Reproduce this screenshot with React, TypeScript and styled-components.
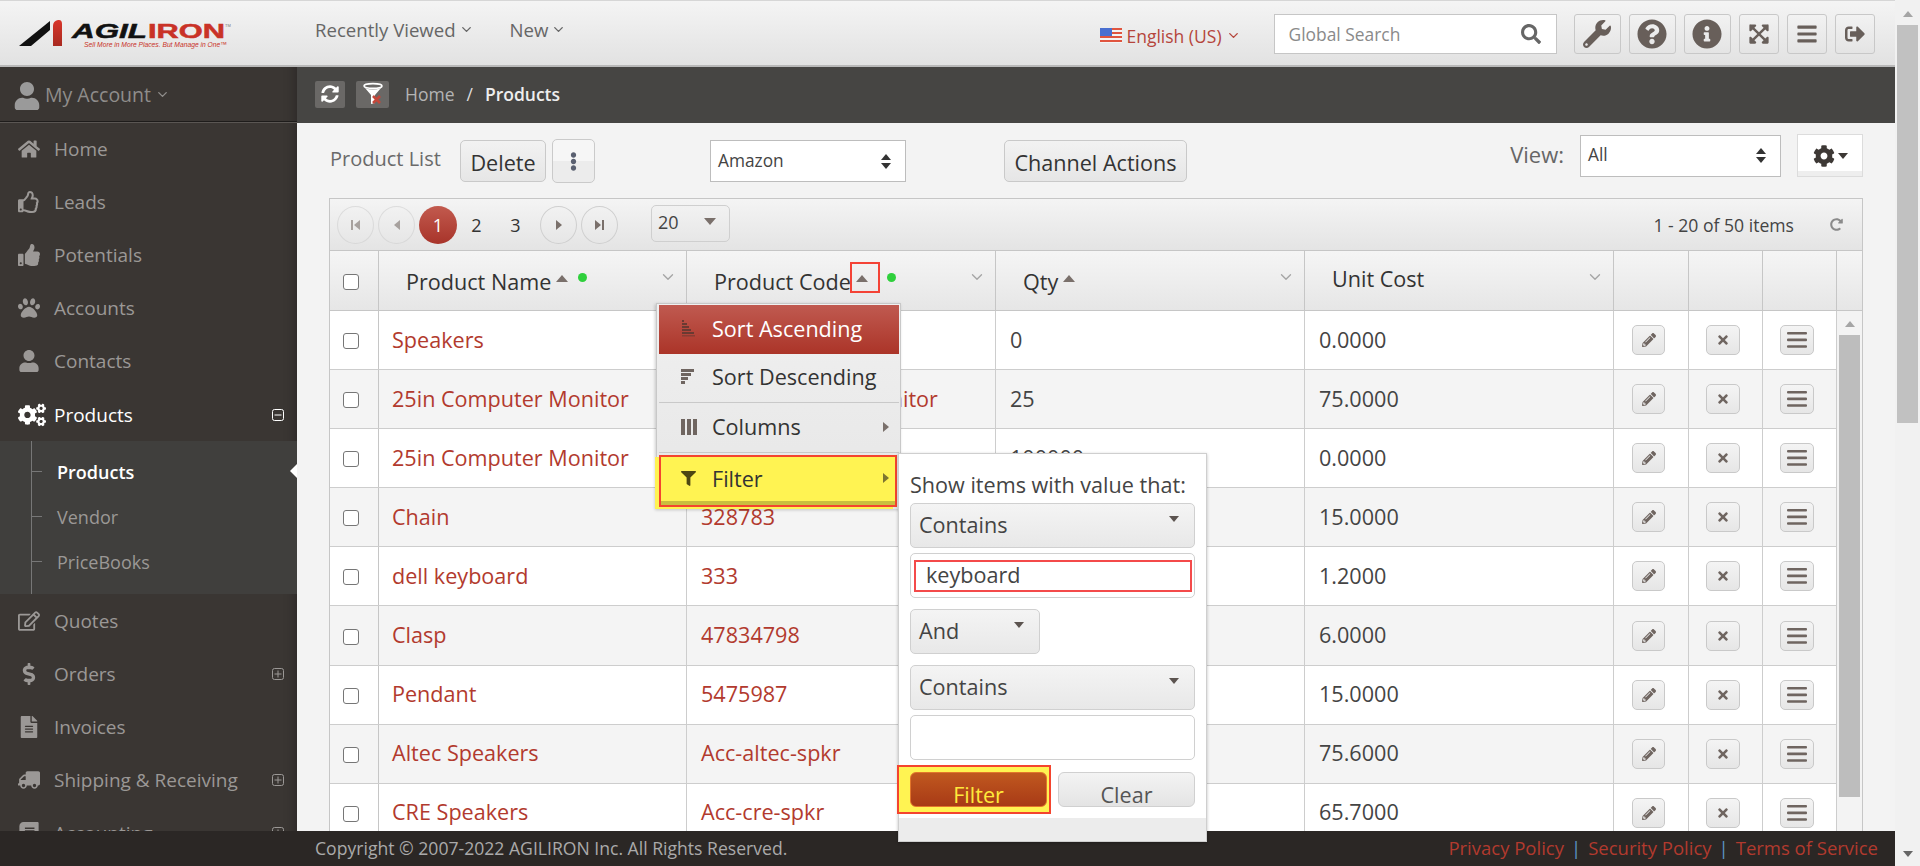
import React from "react";
import styled, { createGlobalStyle } from "styled-components";
import {
  FaHome, FaRegThumbsUp, FaThumbsUp, FaPaw, FaUser, FaCogs, FaRegEdit, FaDollarSign, FaFileAlt, FaTruck, FaBook,
  FaWrench, FaQuestionCircle, FaInfoCircle, FaExpandArrowsAlt, FaBars, FaSignOutAlt, FaSearch, FaSyncAlt, FaCog,
  FaPencilAlt, FaTimes, FaEllipsisV, FaFilter, FaRedoAlt,
} from "react-icons/fa";
import { ChevronDown } from "lucide-react";

const Global = createGlobalStyle`
  html, body { margin: 0; padding: 0; height: 100%; overflow: hidden; }
  body { font-family: "Open Sans", "Liberation Sans", sans-serif; color: #333; }
  * { box-sizing: border-box; }
`;

const ACCENT = "#b23a2e";

const Shell = styled.div`position: relative; display: flex; width: 100%; height: 100vh; overflow: hidden; isolation: isolate;`;
const PageColumn = styled.div`flex: 1; min-width: 0; display: flex; flex-direction: column;`;
const PageScroll = styled.div`
  width: 25px; background: #f1f1f1; display: flex; flex-direction: column; align-items: flex-start; padding: 9px 2px 7px 2px;
`;
const ScrollThumb = styled.div`width: 21px; height: 398px; background: #c1c1c1; margin-top: 6px;`;
const Spacer = styled.div`flex: 1;`;
const Tri = styled.span<{ $dir: "up" | "down" | "left" | "right"; $s?: number; $c?: string }>`
  display: inline-block; flex: none; width: 0; height: 0;
  ${(p) => {
    const s = p.$s ?? 6; const c = p.$c ?? "#7a706b";
    if (p.$dir === "up") return `border-left:${s}px solid transparent;border-right:${s}px solid transparent;border-bottom:${s + 1}px solid ${c};`;
    if (p.$dir === "down") return `border-left:${s}px solid transparent;border-right:${s}px solid transparent;border-top:${s + 1}px solid ${c};`;
    if (p.$dir === "left") return `border-top:${s}px solid transparent;border-bottom:${s}px solid transparent;border-right:${s + 1}px solid ${c};`;
    return `border-top:${s}px solid transparent;border-bottom:${s}px solid transparent;border-left:${s + 1}px solid ${c};`;
  }}
`;
const ScrollArrowBox = styled.div`width: 21px; display: flex; justify-content: center; height: 10px; align-items: center;`;

/* Header */
const Header = styled.header`
  height: 67px; flex: none; display: flex; align-items: center; position: relative;
  background: linear-gradient(#f4f4f4, #e2e2e2); border-top: 1px solid #d6d6d6; border-bottom: 2px solid #b9b9b9;
  font-size: 18.6px; color: #666;
`;
const LogoSvg = styled.svg`position: absolute; left: 0; top: -1px;`;
const NavItem = styled.div<{ $ml: number }>`
  display: flex; align-items: center; gap: 3px; margin-left: ${(p) => p.$ml}px; margin-top: -7px; white-space: nowrap;
`;
const Chev = styled(ChevronDown).attrs({ size: 15, strokeWidth: 2.2 })`flex: none;`;
const Lang = styled.div`
  display: flex; align-items: center; color: #b5453b; margin-left: 534px; margin-top: 5px; white-space: nowrap; font-size: 17.5px; gap: 4px;
`;
const SearchBox = styled.div`
  width: 283px; height: 40px; margin-left: 33px; background: #fff; border: 1px solid #c6c6c6; display: flex; align-items: center; padding: 0 15px 0 14px; margin-top: 2px; color: #666;
`;
const SearchInput = styled.input`
  flex: 1; min-width: 0; border: 0; outline: 0; padding: 0; background: transparent; font: inherit; font-size: 17.4px; color: #555;
  &::placeholder { color: #8a8a8a; opacity: 1; }
`;
const ToolBtn = styled.div<{ $w: number; $mr?: number }>`
  width: ${(p) => p.$w}px; height: 40px; margin-right: ${(p) => p.$mr ?? 8}px; border: 1px solid #c8c8c8; border-radius: 3px;
  background: linear-gradient(#f2f2f2, #e4e4e4); display: flex; align-items: center; justify-content: center; color: #685f5a; margin-top: 2px; flex: none;
`;
const ToolGroup = styled.div`display: flex; margin-left: 17px;`;

/* Body */
const Middle = styled.div`flex: 1; min-height: 0; display: flex; overflow: hidden;`;
const Sidebar = styled.nav`
  width: 297px; flex: none; background: #3a3633; box-shadow: inset -14px 0 12px -12px rgba(0,0,0,.25); color: #9b9896; font-size: 19px;
`;
const Account = styled.div`
  height: 55px; display: flex; align-items: center; padding-left: 13px; border-bottom: 1px solid #1e1c1b; box-shadow: 0 1px 0 #5a5653; color: #8f8d8b; gap: 4px; font-size: 19.5px;
`;
const AccountIcon = styled(FaUser)`font-size: 28px; color: #9a9a9a; margin-top: 3px;`;
const MenuItem = styled.div<{ $active?: boolean }>`
  height: 53.2px; display: flex; align-items: center; padding: 0 13px 0 18px; color: ${(p) => (p.$active ? "#fff" : "#9b9896")};
`;
const MenuIcon = styled.span<{ $active?: boolean }>`
  width: 36px; flex: none; display: flex; align-items: center; color: ${(p) => (p.$active ? "#fff" : "#9b9896")}; font-size: 22px;
`;
const MenuLabel = styled.span`flex: 1; white-space: nowrap;`;
const ToggleBox = styled.svg`flex: none;`;
const SubMenu = styled.div`
  position: relative; background: #403f3d; padding: 8px 0; height: 153px;
  &::before { content: ""; position: absolute; left: 31px; top: 0; bottom: 0; width: 1px; background: #777; }
`;
const SubItem = styled.div<{ $active?: boolean }>`
  position: relative; height: 45px; display: flex; align-items: center; padding-left: 57px; color: ${(p) => (p.$active ? "#fff" : "#9b9896")}; font-weight: ${(p) => (p.$active ? 600 : 400)}; font-size: 18px;
  &::before { content: ""; position: absolute; left: 32px; top: 22px; width: 10px; height: 1px; background: #777; }
  ${(p) => p.$active && `&::after { content: ""; position: absolute; right: 0; top: 15px; border-top: 7px solid transparent; border-bottom: 7px solid transparent; border-right: 7px solid #fff; }`}
`;

const Main = styled.main`flex: 1; min-width: 0; background: #f3f3f3; display: flex; flex-direction: column;`;
const Crumbs = styled.div`
  height: 56px; flex: none; background: #464543; display: flex; align-items: center; padding: 0 0 2px 18px; color: #b4b4b4; font-size: 17.5px; white-space: nowrap;
`;
const CrumbBtn = styled.div<{ $w: number; $mr: number }>`
  width: ${(p) => p.$w}px; height: 27px; margin-right: ${(p) => p.$mr}px; background: #6a6866; border-radius: 2px; display: flex; align-items: center; justify-content: center; color: #fff; font-size: 18px;
`;
const CrumbSep = styled.span`margin: 0 12px; color: #ddd;`;
const CrumbCurrent = styled.span`color: #eee; font-weight: 600; font-size: 17.5px;`;

const Content = styled.div`padding: 11px 32px 0; display: flex; flex-direction: column; flex: 1; min-height: 0;`;
const Toolbar = styled.div`height: 64px; flex: none; display: flex; align-items: flex-start;`;
const ToolLeft = styled.div`display: flex; align-items: center; margin-top: 5px; margin-left: 1px;`;
const ToolRight = styled.div`display: flex; align-items: center; margin-left: auto;`;
const ListTitle = styled.span`font-size: 20px; color: #6a6a6a; width: 130px; margin-top: -5px; white-space: nowrap;`;
const GrayBtn = styled.button<{ $w: number; $ml?: number }>`
  width: ${(p) => p.$w}px; height: 42px; margin-left: ${(p) => p.$ml ?? 0}px; border: 1px solid #c9c9c9; border-radius: 5px; font: inherit; font-size: 21.6px; color: #333; padding: 2px 0 0;
  background: linear-gradient(#f2f2f2, #e6e6e6); white-space: nowrap;
`;
const KebabBtn = styled.div`
  width: 43px; height: 44px; margin-left: 6px; border: 1px solid #cacaca; border-radius: 5px; display: flex; align-items: center; justify-content: center;
  background: linear-gradient(#f6f6f6 50%, #ececec 50%); color: #5a6070; font-size: 19px;
`;
const SelectBox = styled.div<{ $w: number; $ml?: number }>`
  width: ${(p) => p.$w}px; height: 42px; margin-left: ${(p) => p.$ml ?? 0}px; background: #fff; border: 1px solid #bdbdbd; display: flex; align-items: center; justify-content: space-between; padding: 0 14px 2px 7px; font-size: 17.3px; color: #444;
`;
const UpDown = styled.span`display: flex; flex-direction: column; gap: 3px; margin-top: 2px;`;
const ViewLabel = styled.span`font-size: 22px; color: #666; margin-right: 16px; margin-top: -3px;`;
const GearBtn = styled.div`
  width: 66px; height: 43px; margin-left: 16px; background: linear-gradient(#fff 88%, #eee 88%); border: 1px solid #dcdcdc; display: flex; align-items: center; justify-content: center; gap: 3px; color: #3d3835; font-size: 22px;
`;

const Grid = styled.div`border: 1px solid #c6c6c6; border-bottom: 0; flex: 1; display: flex; flex-direction: column; min-height: 0; background: #f3f3f3;`;
const Pager = styled.div`
  height: 52px; flex: none; display: flex; align-items: center; padding: 0 19px 0 7px; background: linear-gradient(#f4f4f4, #e4e4e4); border-bottom: 1px solid #c6c6c6; font-size: 18px;
`;
const Circle = styled.div<{ $ml?: number; $off?: boolean }>`
  width: 37px; height: 38px; margin-left: ${(p) => p.$ml ?? 0}px; border: 1px solid #cfcfcf; border-radius: 50%; display: flex; align-items: center; justify-content: center; flex: none; gap: 1px;
  opacity: ${(p) => (p.$off ? 0.6 : 1)};
`;
const CurrentPage = styled.div`
  width: 38px; height: 38px; margin-left: 4px; border-radius: 50%; color: #fff; background: linear-gradient(#c25a4e, #a8342a); display: flex; align-items: center; justify-content: center; flex: none;
`;
const PageNum = styled.div`width: 39px; text-align: center; flex: none; color: #333;`;
const EdgeBar = styled.span`width: 2px; height: 10px; background: #7a706b;`;
const PageSize = styled.div`
  width: 79px; height: 37px; margin-left: 33px; margin-top: -3px; border: 1px solid #cfcfcf; border-radius: 5px; display: flex; align-items: center; justify-content: space-between; padding: 0 13px 3px 6px; color: #444;
`;
const PageInfo = styled.div`margin-left: auto; color: #444; font-size: 17.6px; margin-right: 36px; white-space: nowrap;`;

const COLS = "49px 308px 309px 309px 309px 75px 74px 74px";
const HeadRow = styled.div`
  height: 60px; flex: none; display: grid; grid-template-columns: ${COLS} 1fr; background: linear-gradient(#f5f5f5, #e6e6e6); border-bottom: 1px solid #c6c6c6;
`;
const HeadCell = styled.div`
  border-right: 1px solid #c6c6c6; display: flex; align-items: center; padding: 0 9px 0 27px; font-size: 21.6px; color: #333; white-space: nowrap; min-width: 0;
`;
const HeadText = styled.span<{ $raise?: boolean }>`margin-top: ${(p) => (p.$raise ? -4 : 2)}px;`;
const CheckCell = styled.div`display: flex; justify-content: center; align-items: center; border-right: 1px solid #c6c6c6; padding-right: 7px;`;
const Check = styled.input`
  appearance: none; width: 16px; height: 16px; margin: 2px 0 0; border: 1.5px solid #767676; border-radius: 3px; background: #fff;
`;
const SortUp = styled.span`margin: -5px 0 0 5px; display: flex;`;
const Dot = styled.span<{ $gap: number }>`width: 9px; height: 9px; border-radius: 50%; background: #2fd03c; margin: -7px 0 0 ${(p) => p.$gap}px; flex: none;`;
const HeadChev = styled(ChevronDown).attrs({ size: 18, strokeWidth: 1.8 })`margin-left: auto; margin-top: -8px; color: #a5a5a5; flex: none;`;
const GridBody = styled.div`flex: 1; min-height: 0; display: flex; overflow: hidden;`;
const Rows = styled.div`width: 1507px; flex: none;`;
const Row = styled.div<{ $alt: boolean }>`
  height: 59.1px; display: grid; grid-template-columns: ${COLS}; background: ${(p) => (p.$alt ? "#f4f4f4" : "#fff")}; border-bottom: 1px solid #cdcdcd; font-size: 21.6px;
`;
const Cell = styled.div`border-right: 1px solid #cdcdcd; display: flex; align-items: center; padding: 0 0 2px 14px; white-space: nowrap; color: #444; overflow: hidden;`;
const LinkCell = styled(Cell)`color: ${ACCENT};`;
const NameCell = styled(LinkCell)`padding-left: 13px;`;
const ActionCell = styled.div`border-right: 1px solid #cdcdcd; display: flex; align-items: center; justify-content: center; padding-right: 5px;`;
const ActionBtn = styled.div<{ $w: number }>`
  width: ${(p) => p.$w}px; height: 30px; border: 1px solid #c9c9c9; border-radius: 5px; background: linear-gradient(#f4f4f4, #e6e6e6); display: flex; align-items: center; justify-content: center; color: #6f6560;
`;
const GridScroll = styled.div`flex: 1; display: flex; flex-direction: column; align-items: center; padding-top: 8px;`;
const GridThumb = styled.div`width: 21px; height: 462px; background: #bdbdbd; margin-top: 6px; flex: none;`;

const Footer = styled.footer`
  height: 35px; flex: none; background: #2b2725; display: flex; align-items: center; justify-content: space-between; padding: 0 17px 2px 315px; color: #aaa; font-size: 17.6px; white-space: nowrap; position: relative;
`;
const FootLinks = styled.div`color: ${ACCENT}; display: flex; font-size: 18.5px;`;
const FootSep = styled.span`color: #5b93c4; margin: 0 7px;`;

/* Overlays */
const SortMark = styled.div`position: absolute; left: 850px; top: 262px; width: 30px; height: 31px; border: 2px solid #f44336;`;
const ColMenu = styled.div`
  position: absolute; left: 656px; top: 303px; width: 245px; height: 206px; padding: 1px 1px 0 2px; background: linear-gradient(#f0f0f0, #e6e6e6); border: 1px solid #c8c8c8; border-bottom: 0; box-shadow: -1px 1px 3px rgba(0,0,0,.2); font-size: 21.6px;
`;
const ColRow = styled.div<{ $h: number; $lift: number; $sep?: boolean; $hot?: boolean }>`
  height: ${(p) => p.$h}px; display: flex; align-items: center; padding: 0 10px ${(p) => p.$lift}px 22px; color: ${(p) => (p.$hot ? "#fff" : "#333")};
  ${(p) => p.$hot && "background: linear-gradient(#c05a50, #ab3428);"}
  ${(p) => p.$sep && "border-bottom: 1px solid #c9c9c9;"}
`;
const ColIcon = styled.span`width: 31px; flex: none; display: flex; align-items: center;`;
const ColText = styled.span`flex: 1; white-space: nowrap;`;
const FilterRow = styled.div`
  height: 52px; margin: 2px 2px 0 0; display: flex; align-items: center; padding: 0 6px 6px 20px; color: #333; background: #fff352;
  border: 2px solid #f4442e; box-shadow: -4px 2px 0 #fff352, inset 0 -4px 0 #c9bf3e;
`;
const FilterPop = styled.div`
  position: absolute; left: 898px; top: 453px; width: 309px; height: 389px; padding: 19px 11px 0; background: #fff; border: 1px solid #cfcfcf; box-shadow: 0 1px 3px rgba(0,0,0,.25); font-size: 21.6px; color: #444; isolation: isolate; display: flex; flex-direction: column;
`;
const PopLabel = styled.div`line-height: 24px; white-space: nowrap;`;
const Drop = styled.div<{ $w?: number; $mt: number }>`
  width: ${(p) => (p.$w ? `${p.$w}px` : "100%")}; height: 45px; margin-top: ${(p) => p.$mt}px; flex: none; border: 1px solid #d0d0d0; border-radius: 5px; background: linear-gradient(#f4f4f4, #e8e8e8); display: flex; align-items: center; justify-content: space-between; padding: 0 15px 2px 8px;
`;
const DropArrow = styled.span`margin-top: -12px; display: flex;`;
const InputWrap = styled.div`height: 45px; margin-top: 5px; flex: none; border: 1px solid #d0d0d0; border-radius: 5px; padding: 6px 2px 5px 3px; display: flex;`;
const KeywordInput = styled.input`flex: 1; min-width: 0; height: 100%; border: 2px solid #f44a4a; outline: 0; font: inherit; color: #444; padding: 0 0 4px 10px; background: #fff;`;
const BtnRow = styled.div`display: flex; gap: 11px; margin-top: 12px; height: 35px; flex: none;`;
const ApplyBtn = styled.button`
  position: relative; flex: 1; border: 1px solid #e2752a; border-radius: 6px; background: linear-gradient(#c0581f, #a83a16); color: #ffe93b; font: inherit; padding: 10px 0 0; line-height: 24px; overflow: visible;
  &::before { content: ""; position: absolute; left: -14px; right: -5px; top: -8px; bottom: -8px; border: 2px solid #f4442e; background: #fff352; z-index: -1; }
`;
const ClearBtn = styled.button`
  flex: 1; border: 1px solid #d0d0d0; border-radius: 6px; background: linear-gradient(#f3f3f3, #e4e4e4); color: #555; font: inherit; padding: 10px 0 0; line-height: 24px;
`;
const PopFoot = styled.div`height: 23px; background: #ececec; margin: auto -11px 0; flex: none;`;

const Logo = () => (
  <LogoSvg width="240" height="66" viewBox="0 0 240 66">
    <defs>
      <linearGradient id="lg" x1="0" y1="0" x2="0" y2="1"><stop offset="0" stopColor="#d8352a" /><stop offset="1" stopColor="#a82a20" /></linearGradient>
    </defs>
    <polygon points="19,46 50,21 50,30 31,46" fill="#111" />
    <path d="M53 46 V26 Q53 21 58 20 H59 Q62 20 62 24 V46 Z" fill="url(#lg)" />
    <text x="72" y="38" fontFamily="Liberation Sans" fontWeight="700" fontStyle="italic" fontSize="20" textLength="75" lengthAdjust="spacingAndGlyphs" fill="#111" stroke="#111" strokeWidth=".5">AGIL</text>
    <text x="148" y="38" fontFamily="Liberation Sans" fontWeight="700" fontSize="20" textLength="77" lengthAdjust="spacingAndGlyphs" fill="#c93227" stroke="#c93227" strokeWidth=".5">IRON</text>
    <text x="225" y="27" fontFamily="Liberation Sans" fontSize="4" fill="#777">TM</text>
    <text x="84" y="47" fontFamily="Liberation Sans" fontStyle="italic" fontSize="7.6" textLength="143" lengthAdjust="spacingAndGlyphs" fill="#c93227">Sell More in More Places. But Manage in One™</text>
  </LogoSvg>
);

const Flag = () => (
  <svg width="22" height="15" viewBox="0 0 22 15">
    <rect width="22" height="15" fill="#f4f4f4" />
    {[0, 4, 8, 12].map((y) => <rect key={y} y={y} width="22" height="2" fill="#e0553f" />)}
    <rect width="12" height="8" fill="#4a6fd0" />
  </svg>
);

const Toggle = ({ open }: { open: boolean }) => (
  <ToggleBox width="12" height="12" viewBox="0 0 12 12" fill="none" stroke="currentColor" strokeWidth="1">
    <rect x=".5" y=".5" width="11" height="11" rx="2" />
    <path d={open ? "M2.5 6h7" : "M2.5 6h7M6 2.5v7"} />
  </ToggleBox>
);

const FunnelX = () => (
  <svg width="22" height="24" viewBox="0 0 22 24">
    <ellipse cx="11" cy="4" rx="9" ry="2.4" fill="none" stroke="#fff" strokeWidth="1.6" />
    <path d="M3 6 L9 13 V22 L13 21 V13 L19 6 Q11 9 3 6Z" fill="#fff" />
    <path d="M11 14 L18 21 M18 14 L11 21" stroke="#c4473a" strokeWidth="2.6" />
  </svg>
);

const SortAscIcon = () => (
  <svg width="14" height="17" viewBox="0 0 14 17" fill="#6a3a32">
    <rect x="1" y="0" width="2" height="2" /><rect x="1" y="3" width="5" height="2" /><rect x="1" y="6" width="7" height="2" /><rect x="1" y="9" width="9" height="2" /><rect x="1" y="12" width="12" height="2" /><rect x="1" y="15" width="13" height="1.5" opacity=".6" />
  </svg>
);
const SortDescIcon = () => (
  <svg width="14" height="15" viewBox="0 0 14 15" fill="#6f6560">
    <rect width="13" height="3" /><rect y="4" width="10" height="3" /><rect y="8" width="7" height="3" /><rect y="12" width="4" height="3" />
  </svg>
);
const ColumnsIcon = () => (
  <svg width="16" height="16" viewBox="0 0 16 16" fill="#6f6560">
    <rect width="4" height="16" /><rect x="6" width="4" height="16" /><rect x="12" width="4" height="16" />
  </svg>
);
const BarsIcon = () => (
  <svg width="20" height="16" viewBox="0 0 20 16" fill="#6f6560">
    <rect width="20" height="2.6" rx="1" /><rect y="6.6" width="20" height="2.6" rx="1" /><rect y="13.2" width="20" height="2.6" rx="1" />
  </svg>
);

const primary = [
  { label: "Home", icon: <FaHome /> },
  { label: "Leads", icon: <FaRegThumbsUp /> },
  { label: "Potentials", icon: <FaThumbsUp /> },
  { label: "Accounts", icon: <FaPaw /> },
  { label: "Contacts", icon: <FaUser /> },
];
const secondary = [
  { label: "Quotes", icon: <FaRegEdit /> },
  { label: "Orders", icon: <FaDollarSign />, toggle: true },
  { label: "Invoices", icon: <FaFileAlt /> },
  { label: "Shipping & Receiving", icon: <FaTruck style={{ transform: "scaleX(-1)" }} />, toggle: true },
  { label: "Accounting", icon: <FaBook />, toggle: true },
];
const rows = [
  ["Speakers", "SPK-100", "0", "0.0000"],
  ["25in Computer Monitor", "25in Computer Monitor", "25", "75.0000"],
  ["25in Computer Monitor", "25MON", "100000", "0.0000"],
  ["Chain", "328783", "10", "15.0000"],
  ["dell keyboard", "333", "5", "1.2000"],
  ["Clasp", "47834798", "10", "6.0000"],
  ["Pendant", "5475987", "10", "15.0000"],
  ["Altec Speakers", "Acc-altec-spkr", "10", "75.6000"],
  ["CRE Speakers", "Acc-cre-spkr", "10", "65.7000"],
];

export default function App() {
  return (
    <Shell>
      <Global />
      <PageColumn>
        <Header>
          <Logo />
          <NavItem $ml={315}>Recently Viewed <Chev /></NavItem>
          <NavItem $ml={36}>New <Chev /></NavItem>
          <Lang><Flag />English (US) <Chev /></Lang>
          <SearchBox>
            <SearchInput placeholder="Global Search" readOnly />
            <FaSearch size={20} />
          </SearchBox>
          <ToolGroup>
            <ToolBtn $w={47}><FaWrench size={28} /></ToolBtn>
            <ToolBtn $w={47}><FaQuestionCircle size={30} /></ToolBtn>
            <ToolBtn $w={47}><FaInfoCircle size={30} /></ToolBtn>
            <ToolBtn $w={40}><FaExpandArrowsAlt size={22} /></ToolBtn>
            <ToolBtn $w={40}><FaBars size={22} /></ToolBtn>
            <ToolBtn $w={40} $mr={0}><FaSignOutAlt size={20} /></ToolBtn>
          </ToolGroup>
        </Header>
        <Middle>
          <Sidebar>
            <Account><AccountIcon />My Account <Chev /></Account>
            {primary.map((m) => (
              <MenuItem key={m.label}><MenuIcon>{m.icon}</MenuIcon><MenuLabel>{m.label}</MenuLabel></MenuItem>
            ))}
            <MenuItem $active><MenuIcon $active><FaCogs size={28} /></MenuIcon><MenuLabel>Products</MenuLabel><Toggle open /></MenuItem>
            <SubMenu>
              <SubItem $active>Products</SubItem>
              <SubItem>Vendor</SubItem>
              <SubItem>PriceBooks</SubItem>
            </SubMenu>
            {secondary.map((m) => (
              <MenuItem key={m.label}><MenuIcon>{m.icon}</MenuIcon><MenuLabel>{m.label}</MenuLabel>{m.toggle && <Toggle open={false} />}</MenuItem>
            ))}
          </Sidebar>
          <Main>
            <Crumbs>
              <CrumbBtn $w={30} $mr={11}><FaSyncAlt /></CrumbBtn>
              <CrumbBtn $w={33} $mr={16}><FunnelX /></CrumbBtn>
              Home<CrumbSep>/</CrumbSep><CrumbCurrent>Products</CrumbCurrent>
            </Crumbs>
            <Content>
              <Toolbar>
                <ToolLeft>
                  <ListTitle>Product List</ListTitle>
                  <GrayBtn $w={86}>Delete</GrayBtn>
                  <KebabBtn><FaEllipsisV /></KebabBtn>
                  <SelectBox $w={196} $ml={115}>Amazon
                    <UpDown><Tri $dir="up" $s={5} $c="#333" /><Tri $dir="down" $s={5} $c="#333" /></UpDown>
                  </SelectBox>
                  <GrayBtn $w={183} $ml={98}>Channel Actions</GrayBtn>
                </ToolLeft>
                <ToolRight>
                  <ViewLabel>View:</ViewLabel>
                  <SelectBox $w={201}>All
                    <UpDown><Tri $dir="up" $s={5} $c="#333" /><Tri $dir="down" $s={5} $c="#333" /></UpDown>
                  </SelectBox>
                  <GearBtn><FaCog /><Tri $dir="down" $s={5} $c="#3d3835" /></GearBtn>
                </ToolRight>
              </Toolbar>
              <Grid>
                <Pager>
                  <Circle $off><EdgeBar /><Tri $dir="left" $s={5} /></Circle>
                  <Circle $off $ml={4}><Tri $dir="left" $s={5} /></Circle>
                  <CurrentPage>1</CurrentPage>
                  <PageNum>2</PageNum>
                  <PageNum>3</PageNum>
                  <Circle $ml={5}><Tri $dir="right" $s={5} /></Circle>
                  <Circle $ml={4}><Tri $dir="right" $s={5} /><EdgeBar /></Circle>
                  <PageSize>20 <Tri $dir="down" $s={6} /></PageSize>
                  <PageInfo>1 - 20 of 50 items</PageInfo>
                  <FaRedoAlt size={13} color="#8a8a8a" />
                </Pager>
                <HeadRow>
                  <CheckCell><Check type="checkbox" readOnly /></CheckCell>
                  <HeadCell><HeadText>Product Name</HeadText><SortUp><Tri $dir="up" /></SortUp><Dot $gap={10} /><HeadChev /></HeadCell>
                  <HeadCell><HeadText>Product Code</HeadText><SortUp><Tri $dir="up" /></SortUp><Dot $gap={19} /><HeadChev /></HeadCell>
                  <HeadCell><HeadText>Qty</HeadText><SortUp><Tri $dir="up" /></SortUp><HeadChev /></HeadCell>
                  <HeadCell><HeadText $raise>Unit Cost</HeadText><HeadChev /></HeadCell>
                  <HeadCell /><HeadCell /><HeadCell /><div />
                </HeadRow>
                <GridBody>
                  <Rows>
                    {rows.map((r, i) => (
                      <Row key={i} $alt={i % 2 === 1}>
                        <CheckCell><Check type="checkbox" readOnly /></CheckCell>
                        <NameCell>{r[0]}</NameCell>
                        <LinkCell>{r[1]}</LinkCell>
                        <Cell>{r[2]}</Cell>
                        <Cell>{r[3]}</Cell>
                        <ActionCell><ActionBtn $w={33}><FaPencilAlt size={14} /></ActionBtn></ActionCell>
                        <ActionCell><ActionBtn $w={34}><FaTimes size={14} /></ActionBtn></ActionCell>
                        <ActionCell><ActionBtn $w={34}><BarsIcon /></ActionBtn></ActionCell>
                      </Row>
                    ))}
                  </Rows>
                  <GridScroll>
                    <ScrollArrowBox><Tri $dir="up" $s={5} $c="#a5a5a5" /></ScrollArrowBox>
                    <GridThumb />
                  </GridScroll>
                </GridBody>
              </Grid>
            </Content>
          </Main>
        </Middle>
        <Footer>
          <span>Copyright © 2007-2022 AGILIRON Inc. All Rights Reserved.</span>
          <FootLinks>Privacy Policy<FootSep>|</FootSep>Security Policy<FootSep>|</FootSep>Terms of Service</FootLinks>
        </Footer>
      </PageColumn>
      <PageScroll>
        <ScrollArrowBox><Tri $dir="up" $s={5} $c="#a5a5a5" /></ScrollArrowBox>
        <ScrollThumb />
        <Spacer />
        <ScrollArrowBox><Tri $dir="down" $s={5} $c="#666" /></ScrollArrowBox>
      </PageScroll>

      <SortMark />
      <ColMenu>
        <ColRow $h={49} $lift={3} $hot><ColIcon><SortAscIcon /></ColIcon><ColText>Sort Ascending</ColText></ColRow>
        <ColRow $h={49} $lift={4} $sep><ColIcon><SortDescIcon /></ColIcon><ColText>Sort Descending</ColText></ColRow>
        <ColRow $h={50} $lift={2} $sep><ColIcon><ColumnsIcon /></ColIcon><ColText>Columns</ColText><Tri $dir="right" $s={5} /></ColRow>
        <FilterRow><ColIcon><FaFilter size={15} color="#4d4712" /></ColIcon><ColText>Filter</ColText><Tri $dir="right" $s={5} $c="#7d7530" /></FilterRow>
      </ColMenu>
      <FilterPop>
        <PopLabel>Show items with value that:</PopLabel>
        <Drop $mt={6}>Contains<DropArrow><Tri $dir="down" $s={5} $c="#5c5450" /></DropArrow></Drop>
        <InputWrap><KeywordInput defaultValue="keyboard" /></InputWrap>
        <Drop $w={130} $mt={11}>And<DropArrow><Tri $dir="down" $s={5} $c="#5c5450" /></DropArrow></Drop>
        <Drop $mt={11}>Contains<DropArrow><Tri $dir="down" $s={5} $c="#5c5450" /></DropArrow></Drop>
        <InputWrap />
        <BtnRow>
          <ApplyBtn>Filter</ApplyBtn>
          <ClearBtn>Clear</ClearBtn>
        </BtnRow>
        <PopFoot />
      </FilterPop>
    </Shell>
  );
}
